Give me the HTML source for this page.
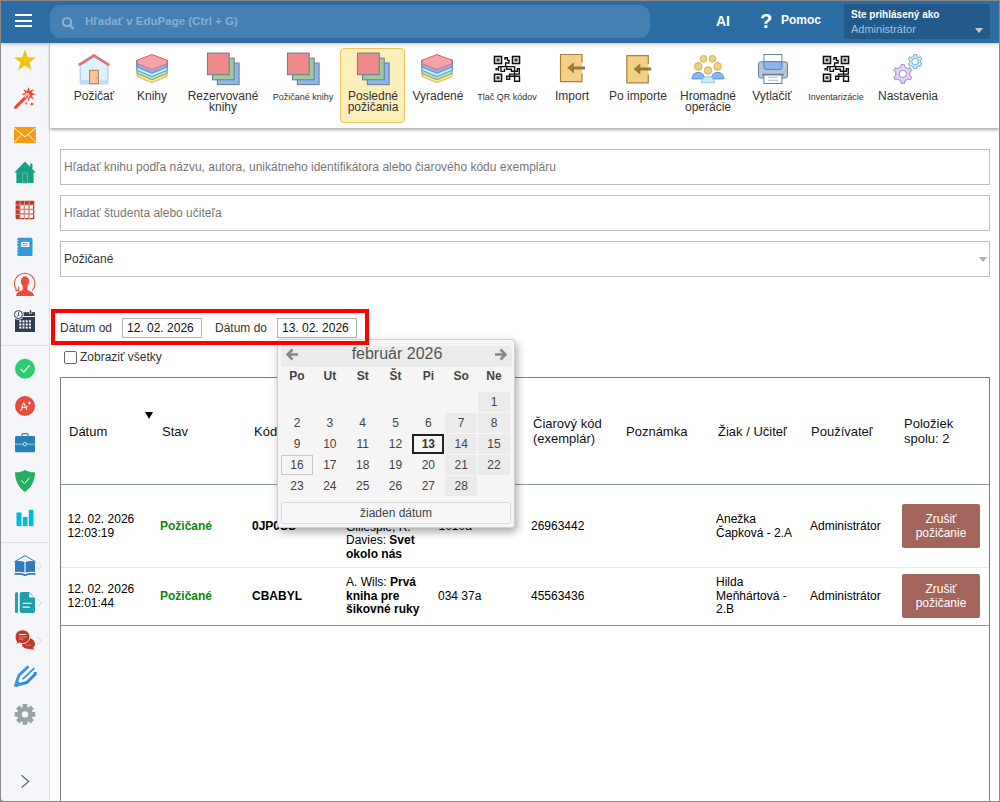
<!DOCTYPE html>
<html><head><meta charset="utf-8">
<style>
*{box-sizing:border-box}
html,body{margin:0;padding:0;width:1000px;height:802px;overflow:hidden;background:#fff;font-family:"Liberation Sans",sans-serif;color:#222}
.a{position:absolute}
#frame{position:absolute;left:0;top:0;width:1000px;height:802px;border:1px solid #8a8a8a;pointer-events:none;z-index:50}
#hdr{left:1px;top:1px;width:998px;height:42px;background:#2c6ea4;box-shadow:0 1px 4px rgba(0,0,0,.25);z-index:8}
#search{left:49px;top:4px;width:600px;height:33px;background:#4680b3;border-radius:11px}
#search .ph{left:35px;top:10px;font-size:11.5px;color:#88add0;white-space:nowrap;font-weight:bold}
#acct{left:843px;top:3px;width:146px;height:35px;background:#235a89;border-radius:3px}
#side{left:1px;top:43px;width:49px;height:758px;background:#f4f6f9;border-right:1px solid #dfe2e7;border-bottom-left-radius:3px}
#tb{left:50px;top:43px;width:949px;height:85px;background:#fff;box-shadow:0 2px 3px rgba(0,0,0,.33)}
.tbi{position:absolute;top:0;height:85px;text-align:center;font-size:12px;color:#333;line-height:11px}
.tl{position:absolute;top:91px;width:100px;text-align:center;font-size:12px;line-height:11px;color:#333;white-space:nowrap;z-index:7}
.tl.sm{font-size:9px;top:92px}
.lbl{position:absolute;left:0;right:0;top:48px;white-space:nowrap}
.inp{position:absolute;left:60px;width:930px;height:36px;border:1px solid #bdbdbd;background:#fff;font-size:12px;color:#777;padding:10px 0 0 3px;white-space:nowrap}
.t12{font-size:12px;color:#333;white-space:nowrap;line-height:14px}
.dinp{top:318px;width:80px;height:20px;border:1px solid #b5b5b5;background:#fff;font-size:12px;color:#111;padding:2px 0 0 4px;line-height:14px;white-space:nowrap}
.th{font-size:13px;color:#111;white-space:nowrap;line-height:15px}
.td{font-size:12px;color:#000;white-space:nowrap;line-height:14px}
.b{font-weight:bold}.g{color:#108510}
.btn{left:902px;width:78px;height:44px;background:#a3655b;border-radius:2px;color:#fff;font-size:12px;text-align:center;line-height:14px;padding-top:8px}
#cal{left:277px;top:339px;width:238px;height:189px;background:#f5f5f5;border:1px solid #d0d0d0;border-radius:3px;box-shadow:2px 4px 8px rgba(0,0,0,.35);z-index:10}
.cdn{top:29px;width:32px;text-align:center;font-size:12px;font-weight:bold;color:#444;line-height:14px}
.cd{width:32px;height:20px;text-align:center;font-size:12px;color:#444;line-height:20px}
.cd.we{background:#ebebeb}
.cd.today{border:2px solid #222;font-weight:bold;line-height:16px;color:#333}
.cd.sel{border:1px solid #c8c8c8;line-height:18px}
.cbtn{left:3px;top:162px;width:230px;height:22px;background:#f6f7f9;border:1px solid #d9d9d9;border-radius:3px;text-align:center;font-size:12px;color:#444;line-height:20px}
</style></head><body>
<div id="frame"></div>
<div id="hdr" class="a">
  <div class="a" style="left:13.7px;top:13.2px;width:17.6px;height:2px;background:#fff"></div>
  <div class="a" style="left:13.7px;top:18.5px;width:17.6px;height:2px;background:#fff"></div>
  <div class="a" style="left:13.7px;top:23.8px;width:17.6px;height:2px;background:#fff"></div>
  <div id="search" class="a">
    <svg class="a" style="left:10px;top:10px" width="15" height="15" viewBox="0 0 15 15"><circle cx="7" cy="7.1" r="4.1" fill="none" stroke="#8db0d0" stroke-width="2.2"/><path d="M10 10.2 L12.9 13.1" stroke="#8db0d0" stroke-width="2.4" stroke-linecap="round"/></svg>
    <div class="a ph">Hľadať v EduPage (Ctrl + G)</div>
  </div>
  <div class="a" style="left:715px;top:12px;font-size:14px;font-weight:bold;color:#fff">AI</div>
  <div class="a" style="left:759px;top:9px;font-size:20px;font-weight:bold;color:#fff">?</div>
  <div class="a" style="left:780px;top:12px;font-size:12px;font-weight:bold;color:#fff">Pomoc</div>
  <div id="acct" class="a">
    <div class="a" style="left:7px;top:5px;font-size:10px;font-weight:bold;color:#fff;white-space:nowrap">Ste prihlásený ako</div>
    <div class="a" style="left:7px;top:19px;font-size:11px;color:#9cc3e8;white-space:nowrap">Administrátor</div>
    <div class="a" style="left:131px;top:24px;width:0;height:0;border-left:4px solid transparent;border-right:4px solid transparent;border-top:5px solid #c9c9c9"></div>
  </div>
</div>
<div class="a" style="left:0;top:794px;width:6px;height:8px;background:#8a8a8a"></div>
<div id="side" class="a"></div>
<svg class="a" style="left:0;top:0;z-index:5" width="50" height="802" viewBox="0 0 50 802">
<!-- star -->
<polygon points="25.0,49.5 27.7,57.3 35.9,57.4 29.4,62.4 31.8,70.3 25.0,65.6 18.2,70.3 20.6,62.4 14.1,57.4 22.3,57.3" fill="#f1c40f"/>
<!-- wand -->
<polygon points="28.5,87.0 29.9,90.9 33.6,89.1 31.8,92.8 35.7,94.2 31.8,95.6 33.6,99.3 29.9,97.5 28.5,101.4 27.1,97.5 23.4,99.3 25.2,95.6 21.3,94.2 25.2,92.8 23.4,89.1 27.1,90.9" fill="#e74c3c"/>
<path d="M15.6 107.4 L27.2 95.6" stroke="#f4f6f9" stroke-width="5" stroke-linecap="round"/>
<path d="M15.6 107.4 L27.2 95.6" stroke="#e74c3c" stroke-width="3" stroke-linecap="round"/>
<path d="M24.6 97.4 L27.6 94.6" stroke="#f4f6f9" stroke-width="1.1"/>
<path d="M26.3 101.8 L27 103.4 L26.3 105 L25.6 103.4Z M24.7 103.4 L26.3 102.7 L27.9 103.4 L26.3 104.1Z" fill="#e74c3c"/>
<path d="M31.9 102 L32.9 104 L31.9 106.3 L30.9 104Z M29.6 104.1 L31.9 103.1 L34.3 104.1 L31.9 105.1Z" fill="#e74c3c"/>
<!-- envelope -->
<rect x="14" y="127" width="22" height="16" fill="#f39c12"/>
<path d="M14 127.8 L25 136.8 L36 127.8" fill="none" stroke="#fff" stroke-width="1"/>
<path d="M14.2 142.4 L21.6 134.6 M35.8 142.4 L28.4 134.6" stroke="#fff" stroke-width="0.9"/>
<!-- house -->
<path d="M25 161.5 L35.7 172.6 L33.6 172.6 L33.6 183 L16.4 183 L16.4 172.6 L14.3 172.6 Z" fill="#16a085"/>
<rect x="30.2" y="163.6" width="2.3" height="5" fill="#16a085"/>
<rect x="22.6" y="173" width="4.8" height="10" fill="none" stroke="#5fc2ad" stroke-width="0.9"/>
<!-- grid -->
<g fill="#c0392b">
<rect x="15.6" y="200.7" width="18.7" height="18.5" rx="1"/>
</g>
<g fill="#fff">
<rect x="20.5" y="205.5" width="3.3" height="3.3"/><rect x="25.1" y="205.5" width="3.3" height="3.3"/><rect x="29.7" y="205.5" width="3.3" height="3.3"/>
<rect x="20.5" y="210.1" width="3.3" height="3.3"/><rect x="25.1" y="210.1" width="3.3" height="3.3"/><rect x="29.7" y="210.1" width="3.3" height="3.3"/>
<rect x="20.5" y="214.7" width="3.3" height="3.3"/><rect x="25.1" y="214.7" width="3.3" height="3.3"/><rect x="29.7" y="214.7" width="3.3" height="3.3"/>
</g>
<g stroke="#f4f6f9" stroke-width="0.9">
<path d="M20.1 200.7 V219.2 M24.6 200.7 V219.2 M29.2 200.7 V219.2 M15.6 205.1 H34.3 M15.6 209.7 H34.3 M15.6 214.3 H34.3" opacity="0.55"/>
</g>
<!-- notebook -->
<rect x="17.3" y="237.8" width="15.2" height="18.2" rx="1.6" fill="#3498db"/>
<path d="M16.6 240.6 h2 M16.6 243.6 h2 M16.6 246.6 h2 M16.6 249.6 h2 M16.6 252.6 h2" stroke="#f4f6f9" stroke-width="0.7"/>
<rect x="21.2" y="241.9" width="8.1" height="5.1" fill="#fff"/>
<path d="M23 243.6 H27.6 M23 245.4 H27.6" stroke="#3498db" stroke-width="0.8"/>
<!-- person -->
<path d="M16.4 289.6 A10.3 10.3 0 1 1 32.4 290.4" fill="none" stroke="#e74c3c" stroke-width="1.1"/>
<path d="M15.2 290.4 L18.6 290.4 L18.8 286.6" fill="none" stroke="#e74c3c" stroke-width="1.1"/>
<ellipse cx="25" cy="281.4" rx="4.2" ry="5.2" fill="#e74c3c"/>
<rect x="22.6" y="284" width="4.8" height="6.4" fill="#e74c3c"/>
<path d="M16 296 C16.4 292.4 19.6 291 22.8 290 H27.2 C30.4 291 33.6 292.4 34 296Z" fill="#e74c3c"/>
<!-- calendar clock -->
<rect x="23.4" y="312.2" width="11.6" height="3.8" fill="#2c3e50"/>
<rect x="15" y="317" width="20" height="15" fill="#2c3e50"/>
<g fill="#fff">
<rect x="19.3" y="320.3" width="2" height="2"/><rect x="22.5" y="320.3" width="2" height="2"/><rect x="25.7" y="320.3" width="2" height="2"/><rect x="28.9" y="320.3" width="2" height="2"/>
<rect x="19.3" y="323.5" width="2" height="2"/><rect x="22.5" y="323.5" width="2" height="2"/><rect x="25.7" y="323.5" width="2" height="2"/><rect x="28.9" y="323.5" width="2" height="2"/>
<rect x="19.3" y="326.6" width="2" height="2"/><rect x="22.5" y="326.6" width="2" height="2"/><rect x="25.7" y="326.6" width="2" height="2"/><rect x="28.9" y="326.6" width="2" height="2"/>
</g>
<rect x="29.6" y="310" width="1.8" height="3.8" fill="#2c3e50" stroke="#f4f6f9" stroke-width="0.5"/>
<circle cx="18.4" cy="314.6" r="5.2" fill="#f4f6f9"/>
<circle cx="18.4" cy="314.6" r="4" fill="none" stroke="#2c3e50" stroke-width="1"/>
<path d="M18.6 311.8 V315 L17.4 316.4" fill="none" stroke="#2c3e50" stroke-width="0.9"/>
<!-- divider -->
<rect x="1" y="345" width="49" height="1" fill="#dde0e5"/>
<!-- green badge -->
<circle cx="25" cy="368.7" r="10" fill="#2ecc71"/>
<path d="M20.6 368.8 L23.8 372 L29.6 365.4" fill="none" stroke="#fff" stroke-width="1.1"/>
<!-- A+ -->
<circle cx="25" cy="406" r="10" fill="#e74c3c"/>
<path d="M20.8 411.2 L23.6 402.4 L26.8 410 M21.4 408 L28 406.6" fill="none" stroke="#fff" stroke-width="1"/>
<path d="M29.4 401.4 v3.2 M27.8 403 h3.2" stroke="#fff" stroke-width="0.9"/>
<!-- briefcase -->
<rect x="22" y="433.6" width="6" height="3" rx="1" fill="none" stroke="#2980b9" stroke-width="1.1"/>
<rect x="15" y="436" width="20" height="16.3" rx="1.3" fill="#2980b9"/>
<path d="M15 444.2 H35" stroke="#8ec0e3" stroke-width="1.1"/>
<circle cx="25" cy="444.2" r="1.7" fill="#2980b9" stroke="#cfe3f2" stroke-width="0.9"/>
<!-- shield -->
<path d="M25 470 C28 471.8 31.8 472.6 35 472.3 C35 480.5 31.5 487.6 25 492 C18.5 487.6 15 480.5 15 472.3 C18.2 472.6 22 471.8 25 470Z" fill="#27ae60"/>
<path d="M21.2 480.5 L24.6 483.6 L29.6 477.6" fill="none" stroke="#fff" stroke-width="1"/>
<!-- chart -->
<rect x="16.5" y="512.5" width="5" height="13.6" fill="#00bcd4"/>
<rect x="22.8" y="517" width="4.7" height="9.1" fill="#00bcd4"/>
<rect x="28.8" y="509.8" width="4.7" height="16.3" fill="#00bcd4"/>
<!-- divider -->
<rect x="1" y="542" width="49" height="1" fill="#dde0e5"/>
<!-- open book -->
<path d="M14.4 561.8 L25 555.6 L35.6 561.8" fill="none" stroke="#2f7bbf" stroke-width="1"/>
<path d="M15 561.6 C18.5 560.8 22 561 24.4 562 V572.6 C22 571.8 18.5 571.6 15 572.2Z M35 561.6 C31.5 560.8 28 561 25.6 562 V572.6 C28 571.8 31.5 571.6 35 572.2Z" fill="#2f7bbf"/>
<path d="M14.6 573.2 C18.5 572.6 22 572.8 25 574.2 C28 572.8 31.5 572.6 35.4 573.2 V575 C31.5 574.6 28 574.8 25 576.2 C22 574.8 18.5 574.6 14.6 575Z" fill="#2f7bbf"/>
<path d="M37.6 562 L41.6 566 L37.6 570" fill="none" stroke="#d2d2d2" stroke-width="0.9"/>
<!-- doc -->
<rect x="15" y="592" width="3" height="21" rx="1.5" fill="#22a0aa"/>
<path d="M21.6 592 H29.2 L35 598 V611 C35 612.2 34.2 613 33 613 H21.6 C20.5 613 19.7 612.2 19.7 611 V594 C19.7 592.9 20.5 592 21.6 592Z" fill="#22a0aa"/>
<path d="M29.2 592.7 V597.6 H34.2Z" fill="#f4f6f9"/>
<path d="M23.2 603.4 H31 M23.2 607.2 H29.4" stroke="#f4f6f9" stroke-width="1.2" stroke-linecap="round"/>
<path d="M37.6 599 L41.6 603 L37.6 607" fill="none" stroke="#d2d2d2" stroke-width="0.9"/>
<!-- chat -->
<path d="M28.6 638.2 c3.6 0 6.4 2.5 6.4 5.6 c0 1.7 -0.8 3.2 -2 4.2 l1.8 1.8 l-4.6 -0.9 c-0.5 0.1 -1 0.1 -1.6 0.1 c-3.6 0 -6.6 -1.9 -6.6 -4.2 c0 -3.1 2.9 -6.6 6.6 -6.6z" fill="#c0392b"/>
<path d="M25.4 645.2 H31.6" stroke="#e27b70" stroke-width="0.9"/>
<path d="M22.5 629.8 c4.1 0 7.4 3.1 7.4 6.9 c0 3.8 -3.3 6.9 -7.4 6.9 c-1.1 0 -2.2 -0.2 -3.1 -0.6 l-4.4 1.7 l1.8 -2.7 c-1.1 -1.3 -1.7 -3 -1.7 -5.3 c0 -3.8 3.3 -6.9 7.4 -6.9z" fill="#c0392b" stroke="#f4f6f9" stroke-width="1"/>
<path d="M19 634.5 H26.4" stroke="#fff" stroke-width="0.9"/>
<path d="M19 637 H26.4 M19 639.2 H23.6" stroke="#e6958c" stroke-width="1"/>
<path d="M37.6 636.6 L41.6 640.6 L37.6 644.6" fill="none" stroke="#d2d2d2" stroke-width="0.9"/>
<!-- pencil -->
<path d="M15.4 685.6 L18.9 675.4 L28.6 666.2" fill="none" stroke="#3b95dd" stroke-width="2.8"/>
<path d="M23.2 678.6 L33.8 668.6" fill="none" stroke="#3b95dd" stroke-width="1.9" stroke-linecap="round"/>
<path d="M15.4 685.6 L26.8 682.4 L35.2 674.2 L35.2 672" fill="none" stroke="#2f86d6" stroke-width="2.8"/>
<path d="M14.1 687.2 L16.6 679.4 L21.6 684.6Z" fill="#3b95dd"/>
<!-- gear -->
<polygon points="32.4,712.0 35.3,712.1 35.3,716.7 32.4,716.8 31.9,718.0 34.0,720.1 30.7,723.4 28.6,721.3 27.4,721.8 27.3,724.7 22.7,724.7 22.6,721.8 21.4,721.3 19.3,723.4 16.0,720.1 18.1,718.0 17.6,716.8 14.7,716.7 14.7,712.1 17.6,712.0 18.1,710.8 16.0,708.7 19.3,705.4 21.4,707.5 22.6,707.0 22.7,704.1 27.3,704.1 27.4,707.0 28.6,707.5 30.7,705.4 34.0,708.7 31.9,710.8" fill="#95a5a6"/>
<circle cx="25" cy="714.4" r="3.2" fill="#f4f6f9"/>
<!-- chevron -->
<path d="M21.6 775.2 L28.6 781.4 L21.6 787.6" fill="none" stroke="#5b6b80" stroke-width="1.3"/>
</svg>

<div id="tb" class="a"></div>
<svg class="a" style="left:0;top:0;z-index:6" width="1000" height="130" viewBox="0 0 1000 130">
<defs>
<g id="layers">
<path d="M0 5.7 L14.9 12 L30.1 5.7 V22 L14.9 28.2 L0 22Z" fill="#fde59a" stroke="#d3b24e" stroke-width="0.9"/>
<path d="M0 5.7 L14.9 12 L30.1 5.7 V19 L14.9 25.2 L0 19Z" fill="#b7dfb4" stroke="#6ba56d" stroke-width="0.9"/>
<path d="M0 5.7 L14.9 12 L30.1 5.7 V15.8 L14.9 22 L0 15.8Z" fill="#c8ecfd" stroke="#5a8fd0" stroke-width="0.9"/>
<path d="M0 5.7 L14.9 12 L30.1 5.7 V12.6 L14.9 18.8 L0 12.6Z" fill="#82b3ec" stroke="#4f83cc" stroke-width="0.9"/>
<path d="M0 5.7 L14.9 0 L30.1 5.7 V9.2 L14.9 15 L0 9.2Z" fill="#f5a3a6" stroke="#d9545c" stroke-width="0.9"/>
<path d="M0 9.2 L14.9 15 L30.1 9.2" fill="none" stroke="#e9868b" stroke-width="0.8"/>
</g>
<g id="sq">
<rect x="10.4" y="10.4" width="21.7" height="21.6" fill="#8ab8f0" stroke="#6e8296" stroke-width="1.1"/>
<rect x="5.5" y="5.6" width="21.7" height="21.6" fill="#a0c99a" stroke="#6e8296" stroke-width="1.1"/>
<rect x="0.5" y="0.5" width="21.7" height="21.6" fill="#f08a8a" stroke="#6e8296" stroke-width="1.1"/>
</g>
<g id="qr" fill="none" stroke="#111" stroke-width="1.6">
<rect x="5.5" y="6.5" width="7" height="7"/>
<rect x="23.5" y="6.5" width="7" height="7"/>
<rect x="5.5" y="24.3" width="7" height="7"/>
<rect x="7.5" y="8.5" width="3" height="3" fill="#333" stroke="none"/>
<rect x="25.5" y="8.5" width="3" height="3" fill="#333" stroke="none"/>
<rect x="7.5" y="26.3" width="3" height="3" fill="#333" stroke="none"/>
<path stroke-width="1.4" d="M16 10 V7.8 H18.4 V10.4 H20 V13 H16.6 V16.6 M7.1 20.4 V18.6 H9.4 V21.1 M9.5 18.6 V16.6 H25.6 V31.2 H30.5 V26.3 H20.6 V29.2 H17.7 V26.3 H20.6 V24.1 H30.3 V18.8 H28.4 V21.2 H22.4 V19.2 H17.6 V16.6 M12 16.6 V21.4 H15.5 V18.8"/>
</g>
<g id="imp">
<rect x="0.5" y="0.5" width="21.5" height="27.1" rx="1" fill="#f4cf85"/>
<path d="M22 8.7 V0.5 H0.5 V27.6 H22 V19.3" fill="none" stroke="#a5843e" stroke-width="1.2"/>
<path d="M7.3 13.8 L14 8.2 V12.4 H25 V15.4 H14 V19.6Z" fill="#977a3f"/>
</g>
</defs>
<!-- house -->
<path d="M80.2 65.5 L94 57 L107.9 65.5 V83.9 H80.2Z" fill="#ddf1fd" stroke="#a9c3e6" stroke-width="1"/>
<rect x="80.7" y="80" width="26.7" height="3.5" fill="#bfdff6"/>
<path d="M78.7 65 L94 55.4 L109.2 65" fill="none" stroke="#dc5b64" stroke-width="2.4"/>
<path d="M78.7 65 L94 55.4 L109.2 65" fill="none" stroke="#f08b92" stroke-width="0.8"/>
<rect x="89.6" y="70.3" width="8.8" height="13.4" fill="#fdc49a" stroke="#ac7a5a" stroke-width="1"/>
<circle cx="96.2" cy="78" r="0.6" fill="#7a5a40"/>
<!-- knihy -->
<use href="#layers" x="137" y="54.5"/>
<!-- rezervovane -->
<use href="#sq" x="207" y="52.6"/>
<use href="#sq" x="287" y="52.6"/>
<use href="#sq" x="357" y="52.6"/>
<!-- vyradene -->
<use href="#layers" x="422" y="54.5"/>
<use href="#qr" x="489" y="50"/>
<use href="#qr" x="818" y="50"/>
<use href="#imp" x="560" y="54"/>
<use href="#imp" x="626.3" y="55.2"/>
<!-- hromadne -->
<g fill="#8ab8ec" stroke="#4f86cf" stroke-width="0.9">
<path d="M692 78.9 A6.3 6.6 0 0 1 704.6 78.9Z"/>
<path d="M711.3 78.9 A6.3 6.6 0 0 1 723.9 78.9Z"/>
</g>
<path d="M701.6 82.8 A6.4 6.4 0 0 1 714.4 82.8Z" fill="#c6ebfc" stroke="#8ec1e8" stroke-width="0.9"/>
<g fill="#ead57a" stroke="#c9a84a" stroke-width="0.8">
<circle cx="703.5" cy="58.8" r="3.4"/><circle cx="712.4" cy="58.8" r="3.4"/>
<circle cx="698.3" cy="66.4" r="3.8"/><circle cx="717.6" cy="66.4" r="3.8"/>
<circle cx="708" cy="70.5" r="3.8"/>
</g>
<!-- printer -->
<rect x="763.9" y="54.5" width="18" height="8" fill="#fff" stroke="#6d8099" stroke-width="1"/>
<rect x="758.5" y="61.8" width="29" height="16.2" rx="2.2" fill="#b4c5da" stroke="#6d8099" stroke-width="1"/>
<path d="M763.9 61.8 H781.9 V67.4 Q781.9 69.4 779.9 69.4 H765.9 Q763.9 69.4 763.9 67.4Z" fill="#8ab8ee" stroke="#4f7fc4" stroke-width="1"/>
<circle cx="784.7" cy="65.6" r="1" fill="#f6e27a"/>
<rect x="762" y="73.8" width="22" height="1.8" rx="0.9" fill="#6d8099"/>
<rect x="763.9" y="75" width="18" height="8.5" fill="#fff" stroke="#6d8099" stroke-width="1"/>
<path d="M768 77.3 H778 M768 80.3 H778" stroke="#a8b5c4" stroke-width="0.9"/>
<!-- gears -->
<polygon points="900.9,66.7 901.2,64.4 904.4,64.4 904.7,66.7 908.1,68.7 910.2,67.8 911.8,70.6 909.9,71.9 909.9,75.9 911.8,77.2 910.2,80.0 908.1,79.1 904.7,81.1 904.4,83.4 901.2,83.4 900.9,81.1 897.5,79.1 895.4,80.0 893.8,77.2 895.7,75.9 895.7,71.9 893.8,70.6 895.4,67.8 897.5,68.7" fill="#ddd3f5" stroke="#9a80c2" stroke-width="0.9"/>
<circle cx="902.8" cy="73.9" r="3.6" fill="#fff" stroke="#9a80c2" stroke-width="0.9"/>
<polygon points="913.4,56.3 913.7,54.5 916.5,54.5 916.8,56.3 918.9,57.5 920.5,56.8 921.9,59.3 920.6,60.4 920.6,62.8 921.9,63.9 920.5,66.4 918.9,65.7 916.8,66.9 916.5,68.7 913.7,68.7 913.4,66.9 911.3,65.7 909.7,66.4 908.3,63.9 909.6,62.8 909.6,60.4 908.3,59.3 909.7,56.8 911.3,57.5" fill="#c6ebfc" stroke="#6fa0c8" stroke-width="0.9"/>
<circle cx="915.1" cy="61.6" r="3.3" fill="#fff" stroke="#6fa0c8" stroke-width="0.9"/>
</svg>
<div class="a" style="left:340px;top:48px;width:65px;height:75px;background:#fdefba;border:1px solid #eec45a;border-radius:4px;z-index:4"></div>
<div class="a tl" style="left:44px">Požičať</div>
<div class="a tl" style="left:102px">Knihy</div>
<div class="a tl" style="left:173px">Rezervované<br>knihy</div>
<div class="a tl sm" style="left:253px">Požičané knihy</div>
<div class="a tl" style="left:323px">Posledné<br>požičania</div>
<div class="a tl" style="left:388px">Vyradené</div>
<div class="a tl sm" style="left:457px">Tlač QR kódov</div>
<div class="a tl" style="left:522px">Import</div>
<div class="a tl" style="left:588px">Po importe</div>
<div class="a tl" style="left:658px">Hromadné<br>operácie</div>
<div class="a tl" style="left:722px">Vytlačiť</div>
<div class="a tl sm" style="left:786px">Inventarizácie</div>
<div class="a tl" style="left:858px">Nastavenia</div>

<div class="inp" style="top:149px">Hľadať knihu podľa názvu, autora, unikátneho identifikátora alebo čiarového kódu exempláru</div>
<div class="inp" style="top:195px">Hľadať študenta alebo učiteľa</div>
<div class="inp" style="top:241px;color:#333">Požičané</div>
<div class="a" style="left:979px;top:257px;width:0;height:0;border-left:4px solid transparent;border-right:4px solid transparent;border-top:5px solid #b0b0b0"></div>
<div class="a" style="left:51px;top:309px;width:318px;height:36px;border:4px solid #f00;z-index:20"></div>
<div class="a t12" style="left:60px;top:321px">Dátum od</div>
<div class="a dinp" style="left:122px">12. 02. 2026</div>
<div class="a t12" style="left:215px;top:321px">Dátum do</div>
<div class="a dinp" style="left:277px">13. 02. 2026</div>
<div class="a" style="left:64px;top:351px;width:13px;height:13px;border:1px solid #666;border-radius:2px;background:#fff"></div>
<div class="a t12" style="left:80px;top:350px">Zobraziť všetky</div>
<!-- table -->
<div id="tbl" class="a" style="left:60px;top:377px;width:930px;height:430px;border:1px solid #7d7d7d;background:#fff"></div>
<div class="a" style="left:61px;top:484px;width:928px;height:1px;background:#8797aa"></div>
<div class="a" style="left:61px;top:567px;width:928px;height:1px;background:#e8e8e8"></div>
<div class="a" style="left:61px;top:625px;width:928px;height:1px;background:#8797aa"></div>
<div class="a th" style="left:69px;top:424px">Dátum</div>
<div class="a" style="left:145px;top:412px;width:0;height:0;border-left:4px solid transparent;border-right:4px solid transparent;border-top:7px solid #000"></div>
<div class="a th" style="left:162px;top:424px">Stav</div>
<div class="a th" style="left:254px;top:424px">Kód</div>
<div class="a th" style="left:346px;top:424px">Titul</div>
<div class="a th" style="left:533px;top:416px;line-height:15px;top:416px">Čiarový kód<br>(exemplár)</div>
<div class="a th" style="left:626px;top:424px">Poznámka</div>
<div class="a th" style="left:718px;top:424px">Žiak / Učiteľ</div>
<div class="a th" style="left:811px;top:424px">Používateľ</div>
<div class="a th" style="left:904px;top:416px;line-height:15px">Položiek<br>spolu: 2</div>
<!-- row 1 -->
<div class="a td" style="left:67.5px;top:512px;line-height:14px">12. 02. 2026<br>12:03:19</div>
<div class="a td b g" style="left:160px;top:519px">Požičané</div>
<div class="a td b" style="left:252px;top:519px">0JP0SS</div>
<div class="a td" style="left:346px;top:507px;line-height:13.5px">A. Ganeri,<br>Gillespie, R.<br>Davies: <b>Svet</b><br><b>okolo nás</b></div>
<div class="a td" style="left:438.5px;top:519px">1010a</div>
<div class="a td" style="left:531px;top:519px">26963442</div>
<div class="a td" style="left:716px;top:512px;line-height:14px">Anežka<br>Čapková - 2.A</div>
<div class="a td" style="left:810px;top:519px">Administrátor</div>
<div class="a btn" style="top:504px">Zrušiť<br>požičanie</div>
<!-- row 2 -->
<div class="a td" style="left:67.5px;top:582px;line-height:14px">12. 02. 2026<br>12:01:44</div>
<div class="a td b g" style="left:160px;top:589px">Požičané</div>
<div class="a td b" style="left:252px;top:589px">CBABYL</div>
<div class="a td" style="left:346px;top:576px;line-height:13.5px">A. Wils: <b>Prvá</b><br><b>kniha pre</b><br><b>šikovné ruky</b></div>
<div class="a td" style="left:438px;top:589px">034 37a</div>
<div class="a td" style="left:531px;top:589px">45563436</div>
<div class="a td" style="left:716px;top:576px;line-height:13.5px">Hilda<br>Meňhártová -<br>2.B</div>
<div class="a td" style="left:810px;top:589px">Administrátor</div>
<div class="a btn" style="top:574px">Zrušiť<br>požičanie</div>
<!-- calendar popup -->
<div id="cal" class="a">
  <div class="a" style="left:3px;top:6px;width:231px;height:21px;background:#ebebeb;border-radius:3px"></div>
  <svg class="a" style="left:8px;top:8px" width="13" height="13" viewBox="0 0 13 13"><path d="M1 6.5 H12 M6.5 1.5 L1.5 6.5 L6.5 11.5" fill="none" stroke="#888" stroke-width="2.6"/></svg>
  <svg class="a" style="left:216px;top:8px" width="13" height="13" viewBox="0 0 13 13"><path d="M12 6.5 H1 M6.5 1.5 L11.5 6.5 L6.5 11.5" fill="none" stroke="#888" stroke-width="2.6"/></svg>
  <div class="a" style="left:0;width:238px;top:5px;text-align:center;font-size:16px;color:#555">február 2026</div>
  <div class="a cdn" style="left:3.00px">Po</div>
  <div class="a cdn" style="left:35.83px">Ut</div>
  <div class="a cdn" style="left:68.66px">St</div>
  <div class="a cdn" style="left:101.49px">Št</div>
  <div class="a cdn" style="left:134.32px">Pi</div>
  <div class="a cdn" style="left:167.15px">So</div>
  <div class="a cdn" style="left:199.98px">Ne</div>
  <div class="a cd we" style="left:199.98px;top:52px">1</div>
  <div class="a cd" style="left:3.00px;top:73px">2</div>
  <div class="a cd" style="left:35.83px;top:73px">3</div>
  <div class="a cd" style="left:68.66px;top:73px">4</div>
  <div class="a cd" style="left:101.49px;top:73px">5</div>
  <div class="a cd" style="left:134.32px;top:73px">6</div>
  <div class="a cd we" style="left:167.15px;top:73px">7</div>
  <div class="a cd we" style="left:199.98px;top:73px">8</div>
  <div class="a cd" style="left:3.00px;top:94px">9</div>
  <div class="a cd" style="left:35.83px;top:94px">10</div>
  <div class="a cd" style="left:68.66px;top:94px">11</div>
  <div class="a cd" style="left:101.49px;top:94px">12</div>
  <div class="a cd today" style="left:134.32px;top:94px">13</div>
  <div class="a cd we" style="left:167.15px;top:94px">14</div>
  <div class="a cd we" style="left:199.98px;top:94px">15</div>
  <div class="a cd sel" style="left:3.00px;top:115px">16</div>
  <div class="a cd" style="left:35.83px;top:115px">17</div>
  <div class="a cd" style="left:68.66px;top:115px">18</div>
  <div class="a cd" style="left:101.49px;top:115px">19</div>
  <div class="a cd" style="left:134.32px;top:115px">20</div>
  <div class="a cd we" style="left:167.15px;top:115px">21</div>
  <div class="a cd we" style="left:199.98px;top:115px">22</div>
  <div class="a cd" style="left:3.00px;top:136px">23</div>
  <div class="a cd" style="left:35.83px;top:136px">24</div>
  <div class="a cd" style="left:68.66px;top:136px">25</div>
  <div class="a cd" style="left:101.49px;top:136px">26</div>
  <div class="a cd" style="left:134.32px;top:136px">27</div>
  <div class="a cd we" style="left:167.15px;top:136px">28</div>
  <div class="a cbtn">žiaden dátum</div>
</div>

</body></html>
